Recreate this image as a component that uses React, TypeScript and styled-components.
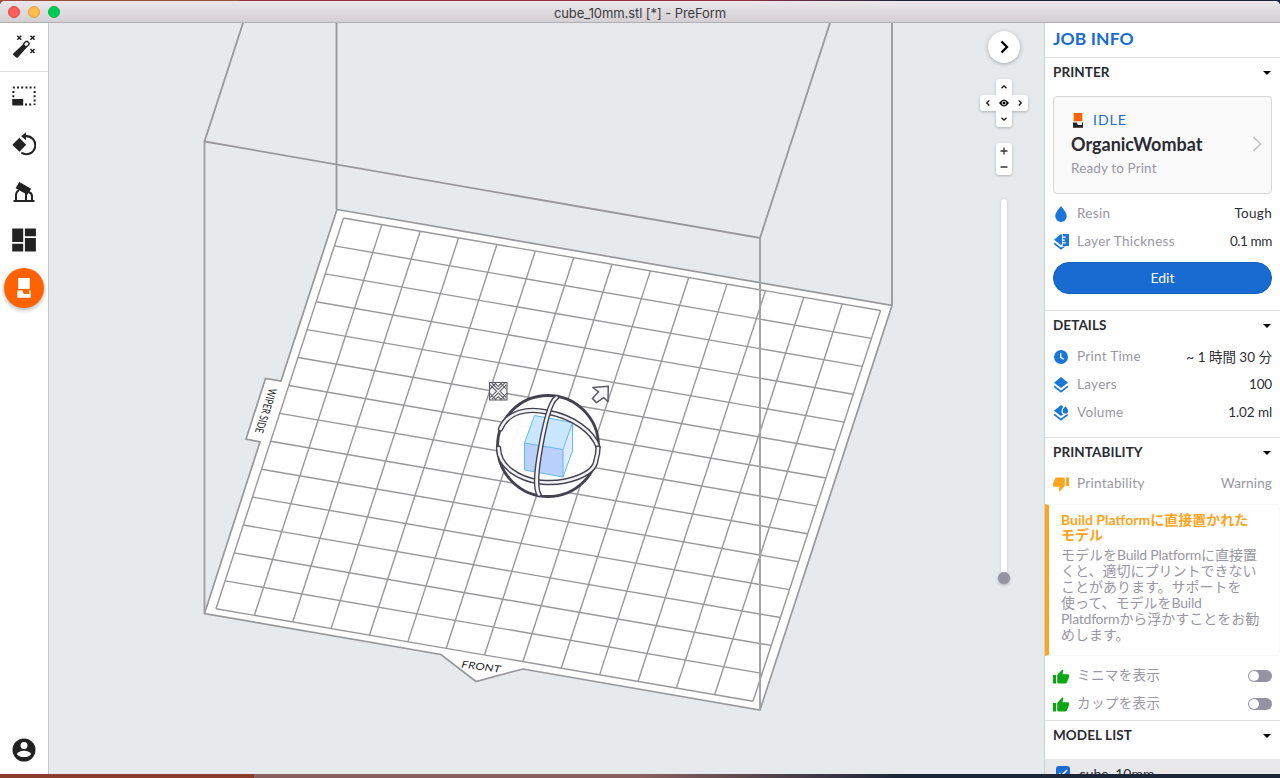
import React from 'react';
import styled, { createGlobalStyle } from 'styled-components';

const Global = createGlobalStyle`
  * { box-sizing: border-box; }
  body { margin: 0; overflow: hidden; font-family: Lato, "Noto Sans CJK JP", sans-serif; font-size: 14px; color: #2e2e36; }
  svg { display: block; flex: none; }
`;

const Desktop = styled.div`
  width: 1280px; height: 778px; padding-top: 1px; overflow: hidden;
  background:
    linear-gradient(90deg, #9a4f38 0 239px, #982f45 240px 740px, #1d2740 900px) top / 100% 8px no-repeat,
    linear-gradient(90deg, #8c3c2c 0 254px, #8a605f 254px 640px, #1b2638 900px) bottom / 100% 8px no-repeat;
`;
const Window = styled.div`
  height: 773px; display: flex; flex-direction: column; border-radius: 5px 5px 0 0; overflow: hidden; background: #fff;
`;
const TitleBar = styled.header`
  height: 22px; flex: none; display: flex; align-items: center; padding-left: 8px; gap: 8px;
  background: linear-gradient(#ebe7eb, #d2d0d2); border-bottom: 1px solid #b1afb1;
`;
const Light = styled.span<{ $color: string; $edge: string }>`
  width: 12px; height: 12px; border-radius: 50%; background: ${p => p.$color}; border: 1px solid ${p => p.$edge};
`;
const Title = styled.h1`
  flex: 1; margin: 0 68px 0 0; text-align: center; font: 400 13px/22px Inter, sans-serif;
  letter-spacing: -0.08px; color: #3c3a3c; padding-top: 2px;
`;
const Body = styled.div`flex: 1; min-height: 0; display: flex;`;
const ToolBar = styled.nav`
  width: 49px; flex: none; border-right: 1px solid #c6c8cc; display: flex; flex-direction: column; align-items: center;
  padding-bottom: 12px;
`;
const Tool = styled.button<{ $divided?: boolean }>`
  width: 48px; height: ${p => (p.$divided ? 49 : 48)}px; padding: 0; border: 0; background: none; flex: none;
  border-bottom: ${p => (p.$divided ? '1px solid #e2e2e4' : '0')};
  display: flex; align-items: center; justify-content: center; color: #222;
`;
const PrintButton = styled(Tool)`
  width: 40px; height: 40px; margin-top: 4px; border-radius: 50%; background: #ff6200; color: #fff;
  box-shadow: 0 2px 4px rgba(0, 0, 0, .3);
`;
const Spacer = styled.div`flex: 1;`;
const Viewport = styled.main`flex: 1; min-width: 0; position: relative; background: #e6eaed; border-right: 1px solid #cfd0d3;`;
const Scene = styled.svg`width: 995px; height: 751px;`;
const ViewControls = styled.div`
  position: absolute; top: 8px; right: 16px; width: 48px; display: flex; flex-direction: column; align-items: center;
`;
const shadow = '0 1px 3px rgba(40, 45, 55, .28)';
const Collapse = styled.button`
  width: 32px; height: 32px; border: 0; padding: 0; border-radius: 50%; background: #fff; box-shadow: 0 1px 4px rgba(40,45,55,.35);
  display: grid; place-items: center;
`;
const Pad = styled.div`margin-top: 16px; display: grid; grid-template-columns: repeat(3, 16px); grid-template-rows: repeat(3, 16px);
  filter: drop-shadow(0 1px 1.5px rgba(40, 45, 55, .3));`;
const PadKey = styled.button<{ $area: string; $radius: string }>`
  grid-area: ${p => p.$area}; border: 0; padding: 0; background: #fff; border-radius: ${p => p.$radius}; display: grid; place-items: center;
`;
const Zoom = styled.div`margin-top: 16px; width: 16px; height: 32px; background: #fff; border-radius: 3px; box-shadow: ${shadow};
  display: flex; flex-direction: column;`;
const ZoomKey = styled.button`height: 16px; padding: 0; border: 0; background: none; display: grid; place-items: center;`;
const Slider = styled.div`margin-top: 24px; display: flex; flex-direction: column; align-items: center;`;
const Track = styled.div`width: 6px; height: 373px; background: #fff; border-radius: 3px 3px 0 0; box-shadow: 0 0 2px rgba(40,45,55,.25);`;
const Knob = styled.div`width: 12px; height: 12px; border-radius: 50%; background: #9593a1; box-shadow: 0 1px 3px rgba(40,45,55,.35);`;

const Panel = styled.aside`width: 235px; flex: none; background: #fff; overflow: hidden;`;
const PanelTitle = styled.h2`
  height: 35px; margin: 0; padding-left: 8px; border-bottom: 1px solid #e2e2e4; color: #186bd0;
  font-size: 17.5px; font-weight: 700; line-height: 32px; letter-spacing: .1px;
`;
const Section = styled.section<{ $height: number }>`height: ${p => p.$height}px; border-bottom: 1px solid #e2e2e4;`;
const SectionHead = styled.h3<{ $gap?: number }>`
  height: 29px; margin: 0 0 ${p => p.$gap ?? 0}px; padding: 0 9px 2px 8px; display: flex; align-items: center; justify-content: space-between;
  font-size: 13.5px; font-weight: 700; color: #2b2b33; letter-spacing: .08px;
`;
const Caret = styled.span`border: 4px solid transparent; border-top-color: #000; border-bottom: 0; margin-top: 3px;`;
const Card = styled.div`
  height: 98px; margin: 9px 8px 6px; padding: 0 9px 2px 17px; border: 1px solid #d7d7da; border-radius: 4px; background: #fafafa;
  display: flex; align-items: center; justify-content: space-between;
`;
const Status = styled.div`height: 22px; display: flex; align-items: center; gap: 8px; color: #186bd0; letter-spacing: 1px; font-size: 14px; line-height: 16px;`;
const PrinterName = styled.div`height: 26px; line-height: 26px; font-size: 18px; font-weight: 700; color: #2b2b33;`;
const Ready = styled.div`height: 22px; line-height: 22px; color: #9997a4; font-size: 13.5px; letter-spacing: .13px;`;
const Row = styled.div`height: 28px; padding: 0 8px 2px; display: flex; align-items: center; font-size: 13.5px; color: #2e2e36;`;
const RowIcon = styled.span`width: 24px; flex: none; padding-top: 2px;`;
const Label = styled.span<{ $japanese?: boolean }>`
  flex: 1; color: #9997a4; letter-spacing: ${p => (p.$japanese ? '.4px' : '.3px')}; padding-bottom: ${p => (p.$japanese ? 2 : 0)}px;
`;
const Value = styled.span<{ $muted?: boolean; $spacing?: number }>`
  color: ${p => (p.$muted ? '#9997a4' : '#2e2e36')}; letter-spacing: ${p => p.$spacing ?? 0}px;
`;
const Edit = styled.button`
  width: 219px; height: 32px; margin: 6px 8px 0; border: 1px solid #1360bd; border-radius: 16px; background: #186bd0; color: #fff;
  font: 14px/28px Lato, sans-serif; padding: 0 0 1px;
`;
const Warning = styled.div`
  height: 152px; margin: 6px 0; padding: 7px 0 0 12px; border: 1px solid #f9f9fa; border-left: 4px solid #ffa41c; border-radius: 0 4px 4px 0;
`;
const WarningTitle = styled.div`color: #ffa41c; font-size: 14px; font-weight: 700; line-height: 15px; white-space: pre;`;
const WarningText = styled.div`margin-top: 5px; color: #9997a4; font-size: 14px; line-height: 16px; white-space: pre;`;
const Latin = styled.span`letter-spacing: -.25px;`;
const Toggle = styled.span`width: 24px; height: 12px; border-radius: 6px; background: #9593a1; padding: 1px; margin-top: 2px;
  &::before { content: ''; display: block; width: 10px; height: 10px; border-radius: 50%; background: #fff; }`;
const ModelRow = styled.div`height: 28px; margin-top: 9px; padding-left: 11px; background: #e8e8ea; display: flex; align-items: center; gap: 9px;`;
const Check = styled.span`width: 14px; height: 14px; border-radius: 3px; background: #186bd0; display: grid; place-items: center;`;

const blue = '#1a76d8';

const WandIcon = () => (
  <svg width="24" height="24" viewBox="0 0 24 24">
    <path d="M11.600 8.800 15 12.200 5.800 22.400Q5 23.200 4.200 22.400L1.300 20Q.5 19.200 1.300 18.400z" fill="currentColor" />
    <rect x="-2.600" y="-2.100" width="5.200" height="4.200" rx="1.400" transform="translate(14.400 9) rotate(-45)" fill="#fff" stroke="currentColor" strokeWidth="1.400" />
    <path d="m5.300.8 4 4m0-4-4 4m13.200-4 4 4m0-4-4 4M18.500 14l4 4m0-4-4 4" stroke="currentColor" strokeWidth="1.500" />
  </svg>
);
const SizeIcon = () => (
  <svg width="24" height="20" viewBox="0 0 24 20" fill="currentColor">
    <path d="M.2 13h11v6.500h-10q-1 0-1-1z" />
    <path d="M.8 1.500h22.600M22.600 5v14M1.400 5v7M13 18.600h8" fill="none" stroke="currentColor" strokeWidth="2" strokeDasharray="2 2.200" />
  </svg>
);
const RotateIcon = () => (
  <svg width="24" height="24" viewBox="0 0 24 24">
    <path d="m7.400 5.800 6.800 7-6.800 7-7-7z" fill="currentColor" />
    <path d="M13.200 4.200a9 9 0 1 1-3.800 16.500" fill="none" stroke="currentColor" strokeWidth="2.100" />
    <path d="M14 .2v8L9.200 4.200z" fill="currentColor" />
  </svg>
);
const SupportIcon = () => (
  <svg width="22" height="20" viewBox="0 0 22 20">
    <path d="m6.300 0 11.800 6.800-3.800 6L2.600 6.300z" fill="currentColor" />
    <path d="M.5 19h21M3 19v-6q0-3 3-5M13 19v-8M19 19v-5q0-3-3.500-4" fill="none" stroke="currentColor" strokeWidth="2" />
  </svg>
);
const LayoutIcon = () => (
  <svg width="24" height="24" viewBox="0 0 24 24" fill="currentColor">
    <path d="M.2.5h11V14H.2zM12.900.5h11v7.800h-11zM.2 15.800h11v7.700H.2zM12.900 10.100h11v13.400h-11z" />
  </svg>
);
const PrinterIcon = ({ width, height, top, base }: { width: number; height: number; top: string; base: string }) => (
  <svg width={width} height={height} viewBox="0 0 14 20">
    <path d="M1.200 0h11.600v11H1.200z" fill={top} />
    <path d="M.3 12.500h5.600v1.600q0 1.800 1.800 1.800h4.500v-3.400h1.500v7.200H.3z" fill={base} />
  </svg>
);
const UserIcon = () => (
  <svg width="24" height="24" viewBox="0 0 24 24">
    <circle cx="12" cy="12" r="11.500" fill="#222" />
    <circle cx="12" cy="7.600" r="3.500" fill="#fff" />
    <path d="M5 16.200c0-2.300 4.700-3.500 7-3.500s7 1.200 7 3.500c-1.500 2.200-4 2.800-7 2.800s-5.500-.6-7-2.800z" fill="#fff" />
  </svg>
);
const DropIcon = () => (
  <svg width="16" height="16" viewBox="0 0 16 16"><path d="M8 0c2.500 3 5.700 6.800 5.700 10A5.700 5.700 0 0 1 8 16a5.700 5.700 0 0 1-5.700-6C2.300 6.800 5.500 3 8 0z" fill={blue} /></svg>
);
const LayersIcon = ({ kind }: { kind?: 'ruler' | 'drop' }) => (
  <svg width="16" height="16" viewBox="0 0 16 16">
    <path d="m8 0 7 5.700-7 5.400L1 5.700z" fill={blue} />
    <path d="m1.200 9.400 6.800 5.300 6.800-5.300" fill="none" stroke={blue} strokeWidth="1.800" />
    {kind === 'ruler' && <><path d="M9 0h7v12.500H9z" fill="#fff" /><path d="M9.800 0H16v12H9.800v-2.400h3V8.300h-3V6.700h2V5.400h-2V3.800h3V2.500h-3z" fill={blue} /></>}
    {kind === 'drop' && <path d="M12.400.3c1.400 1.700 3.400 3.700 3.400 5.400a3.400 3.400 0 0 1-6.800 0C9 4 11 2 12.400.3z" fill={blue} stroke="#fff" strokeWidth="1.200" />}
  </svg>
);
const ClockIcon = () => (
  <svg width="16" height="16" viewBox="0 0 16 16"><circle cx="8" cy="8" r="7" fill={blue} /><path d="M7.700 4v4.300l3 1.900" fill="none" stroke="#fff" strokeWidth="1.300" /></svg>
);
const ThumbIcon = ({ down, color }: { down?: boolean; color: string }) => (
  <svg width="16" height="15" viewBox="0 0 16 15">
    <g fill={color} transform={down ? 'rotate(180 8 7.500)' : undefined}>
      <path d="M0 6h3v8.500H0z" />
      <path d="M4.200 6 9.300.4l1 .9L9.500 5.300h5.300q1.400 0 1.400 1.400l-.4 2-2 4.800q-.4 1-1.500 1H5.700q-1.500 0-1.500-1.500z" />
    </g>
  </svg>
);
const Chevron = ({ angle }: { angle: number }) => (
  <svg width="8" height="8" viewBox="0 0 8 8"><path d="m2.700 1.500 2.500 2.500-2.500 2.500" fill="none" stroke="#111" strokeWidth="1.300" transform={`rotate(${angle} 4 4)`} /></svg>
);
const EyeIcon = () => (
  <svg width="10" height="8" viewBox="0 0 10 8"><path d="M0 4q5-7 10 0-5 7-10 0" /><circle cx="5" cy="4" r="1.900" fill="none" stroke="#fff" strokeWidth=".9" /></svg>
);

const steps = Array.from({ length: 15 }, (_, i) => i);

const Ring = ({ d }: { d: string }) => (
  <g fill="none">
    <path d={d} stroke="#45424f" strokeWidth="5.400" strokeLinecap="round" />
    <path d={d} stroke="#f4f4f6" strokeWidth="2.600" strokeLinecap="round" />
  </g>
);

const BuildPlatform = () => (
  <Scene viewBox="49 23 995 751">
    <g fill="none" stroke="#98979c" strokeWidth="1.800">
      <path d="M336.500 23V209.500M892 23V305.500M243 23 204.500 141.500 760 238 830 23" />
    </g>
    <path d="M337 209.500 892 305.500 760 710 523 669 476 681.500 441 654.500 204.500 613.500 260 442 246 439 265.500 378.500 281 381Z" fill="#fff" stroke="#98979c" strokeWidth="1.700" />
    <g stroke="#98979c" strokeWidth="1.400">
      {steps.map(i => <line key={`c${i}`} x1={343.5 + i * 38.36} y1={218 + i * 6.61} x2={216 + i * 38.36} y2={608.8 + i * 6.61} />)}
      {steps.map(i => <line key={`r${i}`} x1={343.5 - i * 9.107} y1={218 + i * 27.91} x2={880.5 - i * 9.107} y2={310.5 + i * 27.91} />)}
    </g>
    <path d="M204.500 141.500V613.500M760 238V710" stroke="#a3a2a7" strokeWidth="2" />
    <g fill="#222" fontFamily="Lato, sans-serif">
      <text transform="matrix(1 .13 -.25 .82 460.500 667.500)" fontSize="11.500" textLength="39">FRONT</text>
      <text transform="matrix(-.3 .94 -.98 -.17 269 388)" fontSize="11.500" textLength="47" lengthAdjust="spacingAndGlyphs">WIPER SIDE</text>
    </g>
    <circle cx="548" cy="446" r="50.500" fill="#fff" fillOpacity=".96" stroke="#45424f" strokeWidth="2.800" />
    <path d="m534.500 415.500 38 7-9.500 27-38.500-6.500z" fill="#c9e8ff" />
    <path d="m524.500 443 38.500 6.500V477l-38.500-7z" fill="#b9d1fc" />
    <path d="m572.500 422.500-9.500 27V477l9.500-26z" fill="#e1ecff" />
    <path d="m534.500 415.500 38 7-9.500 27-38.500-6.500zM524.500 443v27l38.500 7v-27.500M563 477l9.500-26v-28.500" fill="none" stroke="#62b9f5" strokeWidth="1" />
    <Ring d="M500.500 429C508 411 528 408 547 412 574 417 593 432 598 447" />
    <Ring d="M498.500 448C499 467 519 479 540 482 567 485 595 474 596 460Q598 454 598 448" />
    <Ring d="M556.500 397.500C548 403 542 438 539 457 536 475 536 490 539 494.500" />
    <g fill="#f8f8f8" stroke="#5d5a66" strokeWidth="1.100">
      <path d="M489.500 382.500h17.500v17.500h-17.500z" />
      <path d="m491 384 14.500 14.500M505.500 384 491 398.500" stroke="#5d5a66" strokeWidth="3.400" />
      <path d="m491 384 14.500 14.500M505.500 384 491 398.500" stroke="#f8f8f8" strokeWidth="1.300" />
      <path d="M489.500 389.500 496 383M500.500 383l6 6.500M489.500 393l6.500 7M500.500 400l6.500-7M495 383l3.200 3.500 3.300-3.500M495 400l3.200-3.500 3.300 3.500" fill="none" />
      <path d="M592.800 387.500 608.300 386.200 608 401.700 603.800 397.600 596.500 402.600 592.300 398.400 598.600 391.800Z" strokeWidth="1.500" strokeLinejoin="round" />
    </g>
  </Scene>
);

export default function App() {
  return (
    <>
      <Global />
      <Desktop>
        <Window>
          <TitleBar>
            <Light $color="#ff5f5c" $edge="#e24642" />
            <Light $color="#ffbd4c" $edge="#dfa03a" />
            <Light $color="#00ca56" $edge="#14ae46" />
            <Title>cube_10mm.stl [*] - PreForm</Title>
          </TitleBar>
          <Body>
            <ToolBar>
              <Tool $divided><WandIcon /></Tool>
              <Tool><SizeIcon /></Tool>
              <Tool><RotateIcon /></Tool>
              <Tool><SupportIcon /></Tool>
              <Tool><LayoutIcon /></Tool>
              <PrintButton><PrinterIcon width={14} height={20} top="#fff" base="#fff" /></PrintButton>
              <Spacer />
              <UserIcon />
            </ToolBar>
            <Viewport>
              <BuildPlatform />
              <ViewControls>
                <Collapse>
                  <svg width="16" height="16" viewBox="0 0 16 16"><path d="m5.500 2.500 5.500 5.500-5.500 5.500" fill="none" stroke="#000" strokeWidth="2.300" /></svg>
                </Collapse>
                <Pad>
                  <PadKey $area="1 / 2" $radius="3px 3px 0 0"><Chevron angle={-90} /></PadKey>
                  <PadKey $area="2 / 1" $radius="3px 0 0 3px"><Chevron angle={180} /></PadKey>
                  <PadKey $area="2 / 2" $radius="0"><EyeIcon /></PadKey>
                  <PadKey $area="2 / 3" $radius="0 3px 3px 0"><Chevron angle={0} /></PadKey>
                  <PadKey $area="3 / 2" $radius="0 0 3px 3px"><Chevron angle={90} /></PadKey>
                </Pad>
                <Zoom>
                  <ZoomKey><svg width="8" height="8"><path d="M4 .5v7M.5 4h7" stroke="#333" strokeWidth="1.300" /></svg></ZoomKey>
                  <ZoomKey><svg width="8" height="8"><path d="M.5 4h7" stroke="#333" strokeWidth="1.300" /></svg></ZoomKey>
                </Zoom>
                <Slider><Track /><Knob /></Slider>
              </ViewControls>
            </Viewport>
            <Panel>
              <PanelTitle>JOB INFO</PanelTitle>
              <Section $height={253}>
                <SectionHead>PRINTER<Caret /></SectionHead>
                <Card>
                  <div>
                    <Status><PrinterIcon width={14} height={15} top="#ff6200" base="#222" />IDLE</Status>
                    <PrinterName>OrganicWombat</PrinterName>
                    <Ready>Ready to Print</Ready>
                  </div>
                  <svg width="10" height="16" viewBox="0 0 10 16"><path d="m1.500 1 7 7-7 7" fill="none" stroke="#c3c3c7" strokeWidth="1.700" /></svg>
                </Card>
                <Row><RowIcon><DropIcon /></RowIcon><Label>Resin</Label><Value $spacing={0.3}>Tough</Value></Row>
                <Row><RowIcon><LayersIcon kind="ruler" /></RowIcon><Label>Layer Thickness</Label><Value $spacing={-0.4}>0.1 mm</Value></Row>
                <Edit>Edit</Edit>
              </Section>
              <Section $height={127}>
                <SectionHead $gap={3}>DETAILS<Caret /></SectionHead>
                <Row><RowIcon><ClockIcon /></RowIcon><Label>Print Time</Label><Value>~ 1 時間 30 分</Value></Row>
                <Row><RowIcon><LayersIcon /></RowIcon><Label>Layers</Label><Value $spacing={-0.2}>100</Value></Row>
                <Row><RowIcon><LayersIcon kind="drop" /></RowIcon><Label>Volume</Label><Value $spacing={-0.1}>1.02 ml</Value></Row>
              </Section>
              <Section $height={283}>
                <SectionHead $gap={3}>PRINTABILITY<Caret /></SectionHead>
                <Row><RowIcon><ThumbIcon down color="#ffa41c" /></RowIcon><Label>Printability</Label><Value $muted $spacing={0.15}>Warning</Value></Row>
                <Warning>
                  <WarningTitle>Build Platformに直接置かれた{'\n'}モデル</WarningTitle>
                  <WarningText>
                    モデルを<Latin>Build Platform</Latin>に直接置{'\n'}
                    くと、適切にプリントできない{'\n'}
                    ことがあります。サポートを{'\n'}
                    使って、モデルを<Latin>Build</Latin>{'\n'}
                    <Latin>Platdform</Latin>から浮かすことをお勧{'\n'}
                    めします。
                  </WarningText>
                </Warning>
                <Row><RowIcon><ThumbIcon color="#0aa80f" /></RowIcon><Label $japanese>ミニマを表示</Label><Toggle /></Row>
                <Row><RowIcon><ThumbIcon color="#0aa80f" /></RowIcon><Label $japanese>カップを表示</Label><Toggle /></Row>
              </Section>
              <SectionHead>MODEL LIST<Caret /></SectionHead>
              <ModelRow>
                <Check><svg width="10" height="8" viewBox="0 0 10 8"><path d="m1 4 2.500 2.500L9 1" fill="none" stroke="#fff" strokeWidth="1.500" /></svg></Check>
                cube_10mm
              </ModelRow>
            </Panel>
          </Body>
        </Window>
      </Desktop>
    </>
  );
}
